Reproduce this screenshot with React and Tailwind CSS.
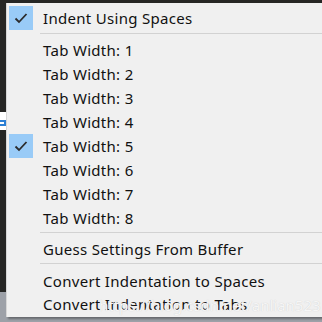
const items = [
  { type: 'item', label: 'Indent Using Spaces', checked: true },
  { type: 'sep', h: 'h-[8px] pt-[3px]' },
  ...[1, 2, 3, 4, 5, 6, 7, 8].map(n => ({ type: 'item', label: `Tab Width: ${n}`, checked: n === 5 })),
  { type: 'sep', h: 'h-[7px] pt-[2px]' },
  { type: 'item', label: 'Guess Settings From Buffer' },
  { type: 'sep', h: 'h-[8px] pt-[2px]' },
  { type: 'item', label: 'Convert Indentation to Spaces' },
  { type: 'item', label: 'Convert Indentation to Tabs', last: true },
]

function Check() {
  return (
    <svg width="14" height="12" viewBox="0 0 14 12" fill="none">
      <path d="M1.5 6.5 L5 10 L12.5 2" stroke="#2b2b2b" strokeWidth="1.8" />
    </svg>
  )
}

export default function App() {
  return (
    <div className="relative w-[322px] h-[322px] overflow-hidden flex flex-col" style={{ fontFamily: '"Noto Sans", "Open Sans", sans-serif' }}>
      {/* editor behind the menu */}
      <div className="flex-1 bg-[#262624] pt-[112px]">
        <div className="w-[6px] h-[18px] bg-white pt-[8px]">
          <div className="h-[6px] border-2 border-[#2b7fd4] border-l-0" />
        </div>
      </div>
      <div className="h-[30px] bg-[#9da1a8]" />

      {/* context menu */}
      <div className="absolute left-[6px] top-[3px] w-[320px] bg-[#f0f0f0] border-l border-[#d6d6d6] pt-[3px] pb-[1px] shadow-[2px_2px_2px_rgba(0,0,0,0.35)]">
        {items.map((it, i) =>
          it.type === 'sep' ? (
            <div key={i} className={`${it.h} pl-[33px]`}>
              <div className="h-px w-full bg-[#d2d2d2]" />
            </div>
          ) : (
            <div key={i} className={`${it.last ? 'h-[23px]' : 'h-[24px]'} flex items-center`}>
              <div className={`w-[24px] h-[24px] ml-[2px] shrink-0 flex items-center justify-center ${it.checked ? 'bg-[#99cbf7]' : ''}`}>
                {it.checked && <Check />}
              </div>
              <span className="ml-[10px] text-[15px] tracking-[0.3px] leading-none text-[#111] whitespace-nowrap">{it.label}</span>
            </div>
          )
        )}
        <span className="absolute left-[92px] bottom-[2px] text-[15px] leading-[20px] text-[#f6f6f6] [text-shadow:0_0_1px_#c8c8c8] whitespace-nowrap pointer-events-none">
          https://blog.csdn.net/anlian523
        </span>
      </div>
    </div>
  )
}
